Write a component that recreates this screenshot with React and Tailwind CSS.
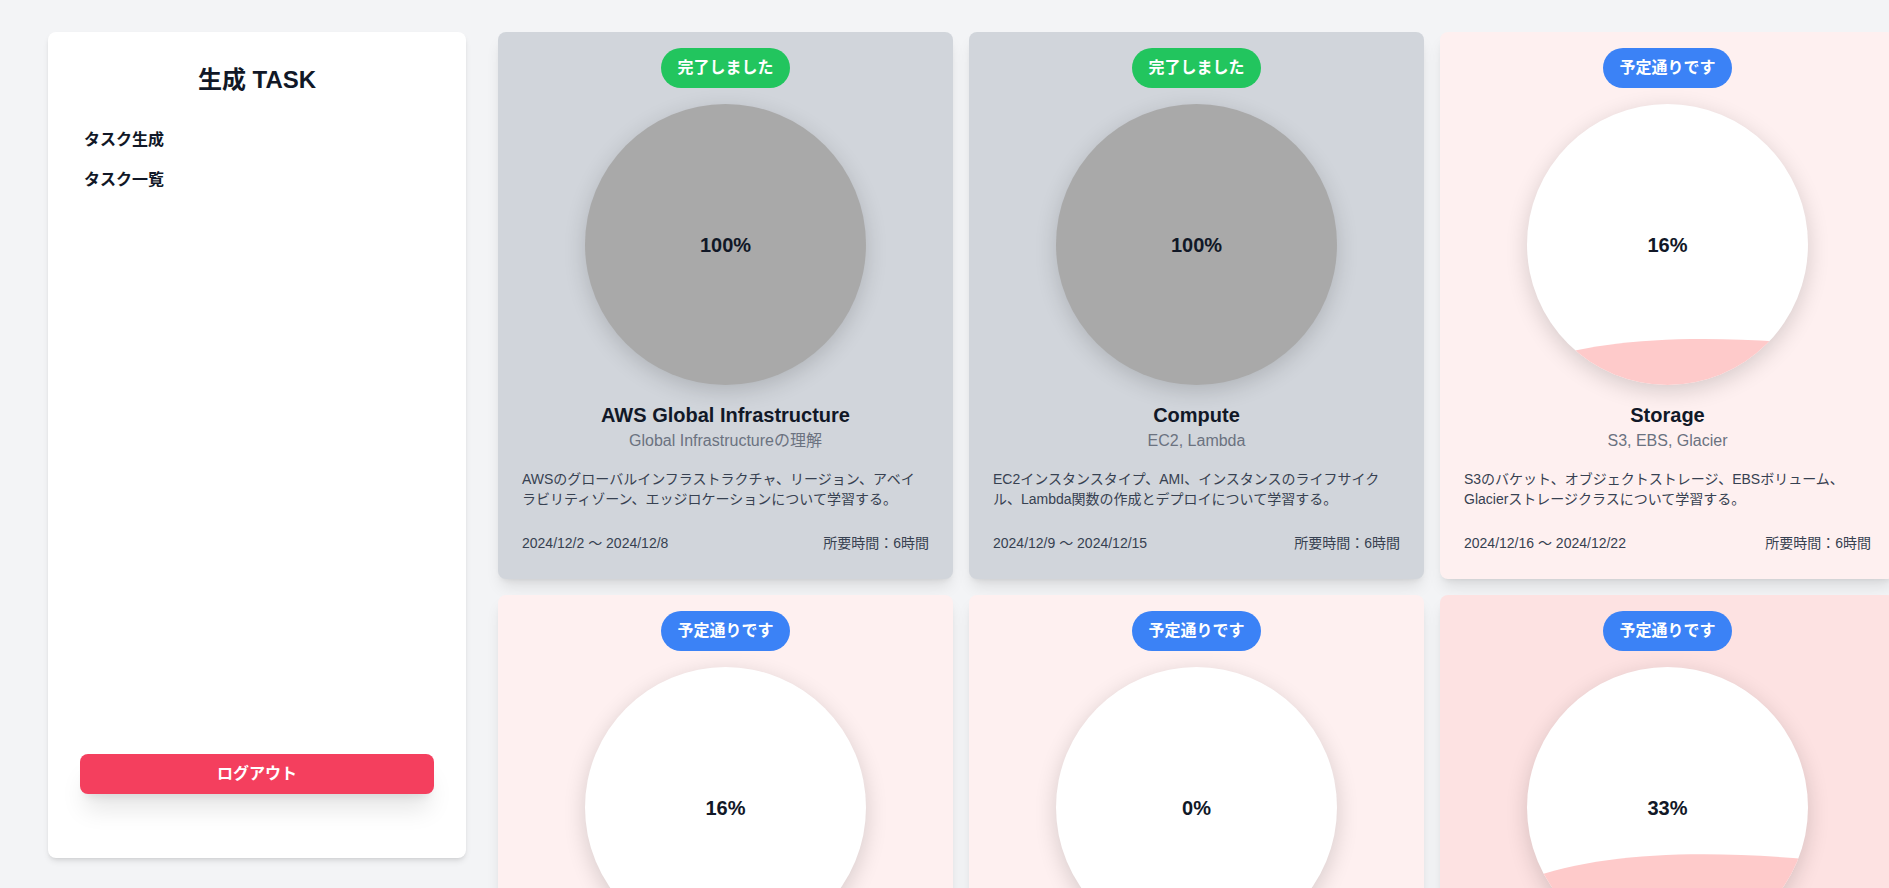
import React from "react";

const FONT = { fontFamily: '"Liberation Sans", Arial, "Noto Sans CJK JP", sans-serif' };

const tasks = [
  {
    status: "done",
    percent: 100,
    title: "AWS Global Infrastructure",
    subtitle: "Global Infrastructureの理解",
    desc: "AWSのグローバルインフラストラクチャ、リージョン、アベイラビリティゾーン、エッジロケーションについて学習する。",
    period: "2024/12/2 ～ 2024/12/8",
    bg: "bg-[#d1d5db]",
  },
  {
    status: "done",
    percent: 100,
    title: "Compute",
    subtitle: "EC2, Lambda",
    desc: "EC2インスタンスタイプ、AMI、インスタンスのライフサイクル、Lambda関数の作成とデプロイについて学習する。",
    period: "2024/12/9 ～ 2024/12/15",
    bg: "bg-[#d1d5db]",
  },
  {
    status: "plan",
    percent: 16,
    title: "Storage",
    subtitle: "S3, EBS, Glacier",
    desc: "S3のバケット、オブジェクトストレージ、EBSボリューム、Glacierストレージクラスについて学習する。",
    period: "2024/12/16 ～ 2024/12/22",
    bg: "bg-[#fef0f0]",
  },
  {
    status: "plan",
    percent: 16,
    title: "Networking",
    subtitle: "VPC, Route 53",
    desc: "VPC、サブネット、セキュリティグループ、Route 53について学習する。",
    period: "2024/12/23 ～ 2024/12/29",
    bg: "bg-[#fef0f0]",
  },
  {
    status: "plan",
    percent: 0,
    title: "Database",
    subtitle: "RDS, DynamoDB",
    desc: "RDS、DynamoDB、Auroraの特徴と使い分けについて学習する。",
    period: "2024/12/30 ～ 2025/1/5",
    bg: "bg-[#fef0f0]",
  },
  {
    status: "plan",
    percent: 33,
    title: "Security",
    subtitle: "IAM, KMS",
    desc: "IAMユーザー、ロール、ポリシー、KMSによる暗号化について学習する。",
    period: "2025/1/6 ～ 2025/1/12",
    bg: "bg-[#fde2e2]",
  },
];

function wavePath(percent) {
  if (percent <= 0) return null;
  if (percent >= 100) return null;
  const level = 280 * (1 - percent / 100);
  const l = level + 24;
  const c1 = level - 2;
  const c2 = level - 6;
  const r = level + 4;
  return `M0,${l} C70,${c1} 170,${c2} 280,${r} L280,280 L0,280 Z`;
}

function Circle({ percent, done }) {
  const d = wavePath(percent);
  return (
    <div
      className={`relative w-[281px] h-[281px] rounded-full overflow-hidden shadow-[0_6px_22px_rgba(0,0,0,0.16)] ${
        done ? "bg-[#a9a9a9]" : "bg-white"
      }`}
    >
      {d && (
        <svg viewBox="0 0 280 280" className="absolute inset-0 w-full h-full">
          <path d={d} fill="#fecaca" />
        </svg>
      )}
      <div className="absolute inset-0 flex items-center justify-center text-xl font-bold text-[#111827]">
        {percent}%
      </div>
    </div>
  );
}

function Card({ t }) {
  const done = t.status === "done";
  return (
    <div className={`${t.bg} rounded-lg shadow-lg pt-4 px-6 pb-[26px] flex flex-col items-center`}>
      <span
        className={`px-4 py-2 rounded-full text-base leading-6 font-bold text-white ${
          done ? "bg-[#22c55e]" : "bg-[#3b82f6]"
        }`}
      >
        {done ? "完了しました" : "予定通りです"}
      </span>
      <div className="mt-4">
        <Circle percent={t.percent} done={done} />
      </div>
      <h2 className="mt-4 text-xl font-bold text-[#111827] leading-7">{t.title}</h2>
      <p className="text-base text-[#6b7280] leading-6">{t.subtitle}</p>
      <p className="mt-4 self-stretch pr-3 text-sm leading-5 text-[#374151]">{t.desc}</p>
      <div className="mt-6 self-stretch flex justify-between text-sm leading-5 text-[#374151]">
        <span>{t.period}</span>
        <span>所要時間：6時間</span>
      </div>
    </div>
  );
}

export default function App() {
  return (
    <div className="h-screen w-full overflow-hidden bg-[#f3f4f6] flex items-start pl-12 pt-8" style={FONT}>
      <aside className="w-[418px] h-[826px] shrink-0 bg-white rounded-lg shadow-md px-8 pt-8 pb-16 flex flex-col">
        <h1 className="text-2xl leading-8 font-bold text-center text-[#111827]">生成 TASK</h1>
        <nav className="mt-6 flex flex-col">
          <a className="py-2 pl-1 text-base leading-6 font-bold text-[#111827]">タスク生成</a>
          <a className="py-2 pl-1 text-base leading-6 font-bold text-[#111827]">タスク一覧</a>
        </nav>
        <div className="mt-auto">
          <button className="w-full h-10 rounded-lg bg-[#f43f5e] text-white font-bold text-base shadow-xl">
            ログアウト
          </button>
        </div>
      </aside>
      <main className="ml-8 shrink-0 grid grid-cols-[455px_455px_455px] gap-4">
        {tasks.map((t, i) => (
          <Card key={i} t={t} />
        ))}
      </main>
    </div>
  );
}
